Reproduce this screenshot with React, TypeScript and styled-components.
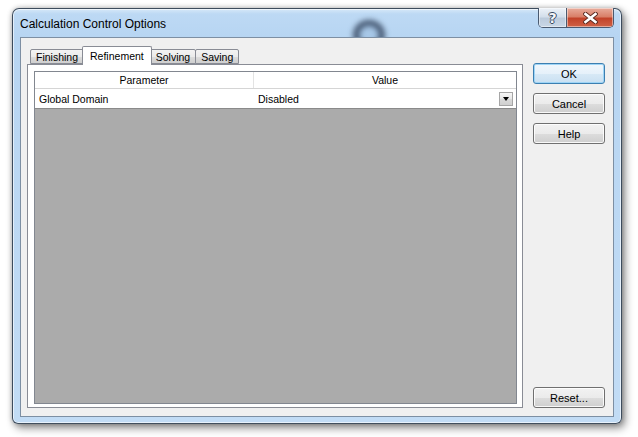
import React from 'react';
import styled, { createGlobalStyle } from 'styled-components';

const GlobalStyle = createGlobalStyle`
  html, body {
    margin: 0;
    padding: 0;
    background: #ffffff;
  }
  body {
    font-family: "Liberation Sans", Arial, sans-serif;
  }
`;

const Stage = styled.div`
  width: 638px;
  height: 437px;
  box-sizing: border-box;
  padding: 8px 0 0 12px;
  overflow: hidden;
  background: #ffffff;
`;

const Window = styled.div`
  position: relative;
  width: 610px;
  height: 416px;
  box-sizing: border-box;
  display: flex;
  flex-direction: column;
  padding: 0 7px 6px 7px;
  border: 1px solid rgba(38, 50, 66, 0.85);
  border-radius: 7px 7px 6px 6px;
  background: linear-gradient(180deg, #d6e8f8 0px, #bdd9f4 5px, #b7d5f2 28px, #c2dcf5 100%);
  box-shadow: 3px 4px 9px rgba(0, 0, 0, 0.45), 0 0 5px rgba(0, 0, 0, 0.25),
    inset 0 0 0 1px rgba(255, 255, 255, 0.6);
`;

// blurred shape seen through the glass title bar
const GlassBlur = styled.span`
  position: absolute;
  left: 338px;
  top: 9px;
  width: 36px;
  height: 34px;
  border-radius: 50%;
  background: radial-gradient(
    ellipse at center,
    rgba(150, 185, 220, 0.5) 28%,
    rgba(30, 45, 70, 0.85) 50%,
    rgba(30, 45, 70, 0) 72%
  );
  filter: blur(2.5px);
`;

const TitleBar = styled.div`
  position: relative;
  height: 28px;
  display: flex;
  align-items: center;
`;

const Title = styled.span`
  font-size: 12px;
  color: #000;
  margin-top: 1px;
`;

const CaptionGroup = styled.div`
  display: flex;
  align-self: flex-start;
  margin-left: auto;
  margin-top: -1px;
  height: 19px;
  border: 1px solid #4a5a70;
  border-top: none;
  border-radius: 0 0 5px 5px;
  overflow: hidden;
`;

const CaptionButton = styled.div<{ $close?: boolean }>`
  width: ${p => (p.$close ? 46 : 27)}px;
  display: flex;
  align-items: center;
  justify-content: center;
  box-shadow: inset 0 0 0 1px rgba(255, 255, 255, 0.45);
  background: ${p =>
    p.$close
      ? 'linear-gradient(180deg, #e8ac9c 0%, #d98069 45%, #c2432a 55%, #cf6246 100%)'
      : 'linear-gradient(180deg, #edf2f8 0%, #d4dfeb 45%, #bccbdc 55%, #c9d7e6 100%)'};
  & + & {
    border-left: 1px solid #4a5a70;
  }
`;

const HelpGlyph = styled.span`
  font-family: "DejaVu Sans", sans-serif;
  font-weight: bold;
  font-size: 14px;
  line-height: 1;
  color: #f4f6f9;
  text-shadow: 1px 0 0 #3a4a60, -1px 0 0 #3a4a60, 0 1px 0 #3a4a60, 0 -1px 0 #3a4a60;
`;

const Client = styled.div`
  position: relative;
  z-index: 1;
  flex: 1;
  display: flex;
  gap: 10px;
  padding: 8px 8px 8px 6px;
  border: 1px solid #7d8fa3;
  background: #f0f0f0;
  min-height: 0;
`;

const LeftPane = styled.div`
  width: 496px;
  display: flex;
  flex-direction: column;
`;

const TabStrip = styled.div`
  height: 18px;
  display: flex;
  align-items: flex-end;
  padding-left: 3px;
  position: relative;
  z-index: 1;
`;

const Tab = styled.div<{ $active?: boolean }>`
  box-sizing: border-box;
  height: ${p => (p.$active ? 19 : 15)}px;
  margin-left: ${p => (p.$active ? -2 : -1)}px;
  margin-right: ${p => (p.$active ? -1 : 0)}px;
  margin-bottom: ${p => (p.$active ? -1 : 0)}px;
  padding: 0 ${p => (p.$active ? 7 : 5)}px;
  display: flex;
  align-items: center;
  font-size: 10.5px;
  color: #000;
  border: 1px solid #898c95;
  border-bottom: ${p => (p.$active ? 'none' : '1px solid #898c95')};
  border-radius: 2px 2px 0 0;
  position: relative;
  z-index: ${p => (p.$active ? 2 : 1)};
  background: ${p =>
    p.$active ? '#ffffff' : 'linear-gradient(180deg, #f3f3f3 0%, #ebebeb 50%, #dddddd 51%, #cfcfcf 100%)'};
  &:first-child {
    margin-left: 0;
  }
`;

const TabPanel = styled.div`
  flex: 1;
  display: flex;
  padding: 6px 5px 3px 6px;
  border: 1px solid #898c95;
  background: #ffffff;
  min-height: 0;
`;

const Grid = styled.div`
  flex: 1;
  display: flex;
  flex-direction: column;
  border: 1px solid #828790;
  background: #ababab;
`;

const HeaderRow = styled.div`
  height: 16px;
  display: flex;
  background: #ffffff;
  border-bottom: 1px solid #d5d5d5;
`;

const HeaderCell = styled.div<{ $w?: number }>`
  ${p => (p.$w ? `width: ${p.$w}px;` : 'flex: 1;')}
  display: flex;
  align-items: center;
  justify-content: center;
  font-size: 10.5px;
  color: #000;
  & + & {
    border-left: 1px solid #e3e3e3;
  }
`;

const DataRow = styled.div`
  height: 19px;
  display: flex;
  background: #ffffff;
  border-bottom: 1px solid #8a8a8a;
`;

const DataCell = styled.div<{ $w?: number }>`
  ${p => (p.$w ? `width: ${p.$w}px;` : 'flex: 1;')}
  display: flex;
  align-items: center;
  padding-left: 4px;
  box-sizing: border-box;
  font-size: 10.5px;
  color: #000;
`;

const DropButton = styled.div`
  width: 14px;
  height: 14px;
  box-sizing: border-box;
  margin: 0 3px 0 auto;
  display: flex;
  align-items: center;
  justify-content: center;
  border: 1px solid #a6a6a6;
  background: linear-gradient(180deg, #f7f7f7 0%, #e7e7e7 50%, #dadada 51%, #d0d0d0 100%);
`;

const Arrow = styled.span`
  width: 0;
  height: 0;
  border-left: 3.5px solid transparent;
  border-right: 3.5px solid transparent;
  border-top: 4px solid #000;
  margin-top: 1px;
`;

const ButtonColumn = styled.div`
  width: 72px;
  display: flex;
  flex-direction: column;
  gap: 9px;
  padding-top: 17px;
`;

const Spacer = styled.div`
  flex: 1;
`;

const PushButton = styled.div<{ $default?: boolean }>`
  height: 21px;
  box-sizing: border-box;
  display: flex;
  align-items: center;
  justify-content: center;
  font-size: 11px;
  color: #000;
  border: 1px solid ${p => (p.$default ? '#3c7fb1' : '#707070')};
  border-radius: 3px;
  box-shadow: inset 0 0 0 1px ${p => (p.$default ? '#9fd5f6' : 'rgba(255,255,255,0.85)')};
  background: ${p =>
    p.$default
      ? 'linear-gradient(180deg, #f1f7fc 0%, #e6f1fa 50%, #d8e9f6 51%, #c9e0f2 100%)'
      : 'linear-gradient(180deg, #f2f2f2 0%, #ebebeb 50%, #dddddd 51%, #cfcfcf 100%)'};
`;

const CloseIcon = () => (
  <svg width="15" height="12" viewBox="0 0 15 12">
    <path d="M2.5 2 L12.5 10 M12.5 2 L2.5 10" stroke="#5a2a20" strokeWidth="4.4" strokeLinecap="square" />
    <path d="M2.5 2 L12.5 10 M12.5 2 L2.5 10" stroke="#ffffff" strokeWidth="2.6" strokeLinecap="square" />
  </svg>
);

export default function App() {
  return (
    <Stage>
      <GlobalStyle />
      <Window>
        <GlassBlur />
        <TitleBar>
          <Title>Calculation Control Options</Title>
          <CaptionGroup>
            <CaptionButton>
              <HelpGlyph>?</HelpGlyph>
            </CaptionButton>
            <CaptionButton $close>
              <CloseIcon />
            </CaptionButton>
          </CaptionGroup>
        </TitleBar>
        <Client>
          <LeftPane>
            <TabStrip>
              <Tab>Finishing</Tab>
              <Tab $active>Refinement</Tab>
              <Tab>Solving</Tab>
              <Tab>Saving</Tab>
            </TabStrip>
            <TabPanel>
              <Grid>
                <HeaderRow>
                  <HeaderCell $w={218}>Parameter</HeaderCell>
                  <HeaderCell>Value</HeaderCell>
                </HeaderRow>
                <DataRow>
                  <DataCell $w={219}>Global Domain</DataCell>
                  <DataCell>
                    Disabled
                    <DropButton>
                      <Arrow />
                    </DropButton>
                  </DataCell>
                </DataRow>
              </Grid>
            </TabPanel>
          </LeftPane>
          <ButtonColumn>
            <PushButton $default>OK</PushButton>
            <PushButton>Cancel</PushButton>
            <PushButton>Help</PushButton>
            <Spacer />
            <PushButton>Reset...</PushButton>
          </ButtonColumn>
        </Client>
      </Window>
    </Stage>
  );
}
